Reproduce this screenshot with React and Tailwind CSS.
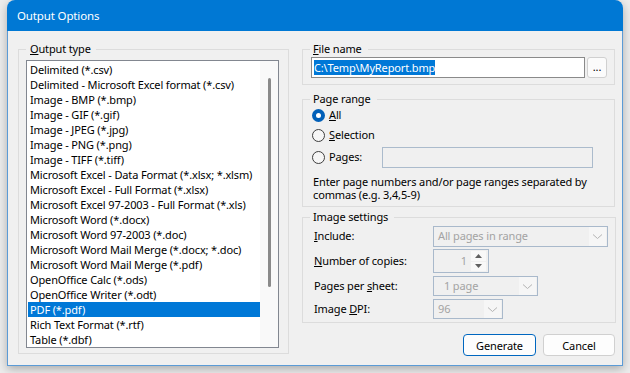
import React from 'react';

const outputTypes = [
  'Delimited (*.csv)',
  'Delimited - Microsoft Excel format (*.csv)',
  'Image - BMP (*.bmp)',
  'Image - GIF (*.gif)',
  'Image - JPEG (*.jpg)',
  'Image - PNG (*.png)',
  'Image - TIFF (*.tiff)',
  'Microsoft Excel - Data Format (*.xlsx; *.xlsm)',
  'Microsoft Excel - Full Format (*.xlsx)',
  'Microsoft Excel 97-2003 - Full Format (*.xls)',
  'Microsoft Word (*.docx)',
  'Microsoft Word 97-2003 (*.doc)',
  'Microsoft Word Mail Merge (*.docx; *.doc)',
  'Microsoft Word Mail Merge (*.pdf)',
  'OpenOffice Calc (*.ods)',
  'OpenOffice Writer (*.odt)',
  'PDF (*.pdf)',
  'Rich Text Format (*.rtf)',
  'Table (*.dbf)',
];

function Chevron() {
  return (
    <svg width="11" height="7" viewBox="0 0 11 7" fill="none">
      <path d="M1 1.5 L5.5 5.5 L10 1.5" stroke="#b4b4b4" strokeWidth="1" />
    </svg>
  );
}

function DisabledSelect({ value, width }) {
  return (
    <div className={`${width} h-full flex items-center border border-[#a9b9cb] bg-[#f0f0f0]`}>
      <span className="flex-1 pl-[4px] text-[#a3a3a3] whitespace-nowrap">{value}</span>
      <span className="w-[17px] h-full flex items-center justify-center bg-[#f6f6f6] mr-[1px] my-[1px]">
        <Chevron />
      </span>
    </div>
  );
}

function Radio({ checked }) {
  if (checked) {
    return (
      <span className="w-[13px] h-[13px] rounded-full bg-[#005fb8] flex items-center justify-center shrink-0">
        <span className="w-[5px] h-[5px] rounded-full bg-white" />
      </span>
    );
  }
  return <span className="w-[13px] h-[13px] rounded-full border border-[#3d3d3d] bg-[#f6f6f6] shrink-0" />;
}

export default function App() {
  return (
    <div className="min-h-screen w-full bg-[#ececec] font-['Segoe_UI','Noto_Sans',sans-serif] text-[11px] tracking-[-0.14px] text-black">
      <div className="ml-[7px] w-[616px] h-[366px] flex flex-col rounded-t-[8px] overflow-hidden shadow-[0_3px_10px_rgba(0,0,0,0.28)]">
        {/* Title bar */}
        <div className="h-[31px] shrink-0 bg-[#0078d4] text-white flex items-center pl-[10px] leading-[16px] text-[11.5px]">
          Output Options
        </div>

        {/* Body */}
        <div className="flex-1 flex bg-[#f0f0f0] border-x border-b border-[#5b9bd6]">
          {/* Output type */}
          <fieldset className="ml-[10px] mt-[10px] w-[271px] h-[313px] border border-[#dcdcdc] pl-[7px] pr-[8px]">
            <legend className="pl-[4px] pr-[5px] leading-[16px]">
              <u>O</u>utput type
            </legend>
            <div className="mt-[3px] w-[253px] h-[288px] border border-[#828790] bg-white flex">
              <div className="w-[233px] pl-[1px] pt-[1px] overflow-hidden">
                {outputTypes.map((t) => (
                  <div
                    key={t}
                    className={
                      t === 'PDF (*.pdf)'
                        ? 'h-[15px] leading-[15px] px-[2px] whitespace-nowrap bg-[#0078d7] text-white'
                        : 'h-[15px] leading-[15px] px-[2px] whitespace-nowrap'
                    }
                  >
                    {t}
                  </div>
                ))}
              </div>
              <div className="w-[18px] bg-[#f9f9f9] pt-[17px] pl-[8px]">
                <div className="w-[3px] h-[209px] rounded-full bg-[#8a8a8a]" />
              </div>
            </div>
          </fieldset>

          {/* Right column */}
          <div className="ml-[13px] mt-[10px] w-[313px] flex flex-col">
            {/* File name */}
            <fieldset className="h-[44px] border border-[#dcdcdc] pl-[8px] pr-[7px]">
              <legend className="-ml-[1px] pl-[3px] pr-[6px] leading-[16px]">
                <u>F</u>ile name
              </legend>
              <div className="flex gap-[2px] h-[21px]">
                <div className="w-[274px] h-full border border-[#8a8a8a] bg-white flex items-center pl-[2px]">
                  <span className="bg-[#0078d7] text-white leading-[15px]">C:\Temp\MyReport.bmp</span>
                </div>
                <div className="w-[20px] h-full rounded-[3px] border border-[#d0d0d0] bg-[#fbfbfb] flex items-center justify-center leading-none pb-[2px]">
                  ...
                </div>
              </div>
            </fieldset>

            {/* Page range */}
            <fieldset className="mt-[6px] h-[116px] border border-[#dcdcdc] pl-[8px] pr-[7px]">
              <legend className="-ml-[1px] pl-[3px] pr-[6px] leading-[16px]">Page range</legend>
              <div className="flex flex-col pl-[1px]">
                <div className="h-[16px] flex items-center gap-[4px]">
                  <Radio checked />
                  <span>
                    <u>A</u>ll
                  </span>
                </div>
                <div className="mt-[4px] h-[16px] flex items-center gap-[4px]">
                  <Radio />
                  <span>
                    <u>S</u>election
                  </span>
                </div>
                <div className="mt-[4px] h-[21px] flex items-center">
                  <div className="w-[70px] flex items-center gap-[4px]">
                    <Radio />
                    <span>
                      Pa<u>g</u>es:
                    </span>
                  </div>
                  <div className="w-[211px] h-full border border-[#abbbcc] bg-[#f0f0f0]" />
                </div>
              </div>
              <p className="mt-[7px] pl-[2px] leading-[13px] whitespace-nowrap">
                Enter page numbers and/or page ranges separated by
                <br />
                commas (e.g. 3,4,5-9)
              </p>
            </fieldset>

            {/* Image settings */}
            <fieldset className="mt-[2px] h-[114px] border border-[#dcdcdc] pl-[8px] pr-[7px]">
              <legend className="-ml-[1px] pl-[3px] pr-[6px] leading-[16px]">Image settings</legend>
              <div className="mt-[1px] h-[21px] flex items-center">
                <span className="w-[122px] pl-[3px]">
                  <u>I</u>nclude:
                </span>
                <DisabledSelect value="All pages in range" width="w-[175px]" />
              </div>
              <div className="mt-[2px] h-[24px] flex items-center">
                <span className="w-[122px] pl-[3px]">
                  <u>N</u>umber of copies:
                </span>
                <div className="w-[56px] h-full border border-[#a9b9cb] bg-[#f0f0f0] flex items-center">
                  <span className="flex-1 text-right pr-[4px] text-[#a3a3a3]">1</span>
                  <div className="w-[15px] h-full flex flex-col gap-[1px] py-[1px] mr-[2px]">
                    <div className="flex-1 bg-[#f8f8f8] flex items-center justify-center">
                      <svg width="7" height="4" viewBox="0 0 7 4">
                        <path d="M0 4 L3.5 0 L7 4 Z" fill="#606060" />
                      </svg>
                    </div>
                    <div className="flex-1 bg-[#f8f8f8] flex items-center justify-center">
                      <svg width="7" height="4" viewBox="0 0 7 4">
                        <path d="M0 0 L7 0 L3.5 4 Z" fill="#606060" />
                      </svg>
                    </div>
                  </div>
                </div>
              </div>
              <div className="mt-[3px] h-[20px] flex items-center">
                <span className="w-[122px] pl-[3px]">
                  Pages per <u>s</u>heet:
                </span>
                <DisabledSelect value={<span className="pl-[6px]">1 page</span>} width="w-[105px]" />
              </div>
              <div className="mt-[3px] h-[20px] flex items-center">
                <span className="w-[122px] pl-[3px]">
                  Image <u>D</u>PI:
                </span>
                <DisabledSelect value="96" width="w-[70px]" />
              </div>
            </fieldset>

            {/* Buttons */}
            <div className="mt-[11px] flex justify-end gap-[7px]">
              <button className="w-[73px] h-[22px] rounded-[4px] border border-[#0067c0] bg-[#fdfdfd] leading-none">
                Generate
              </button>
              <button className="w-[72px] h-[22px] rounded-[4px] border border-[#d0d0d0] bg-[#fdfdfd] leading-none">
                Cancel
              </button>
            </div>
          </div>
        </div>
      </div>
    </div>
  );
}
